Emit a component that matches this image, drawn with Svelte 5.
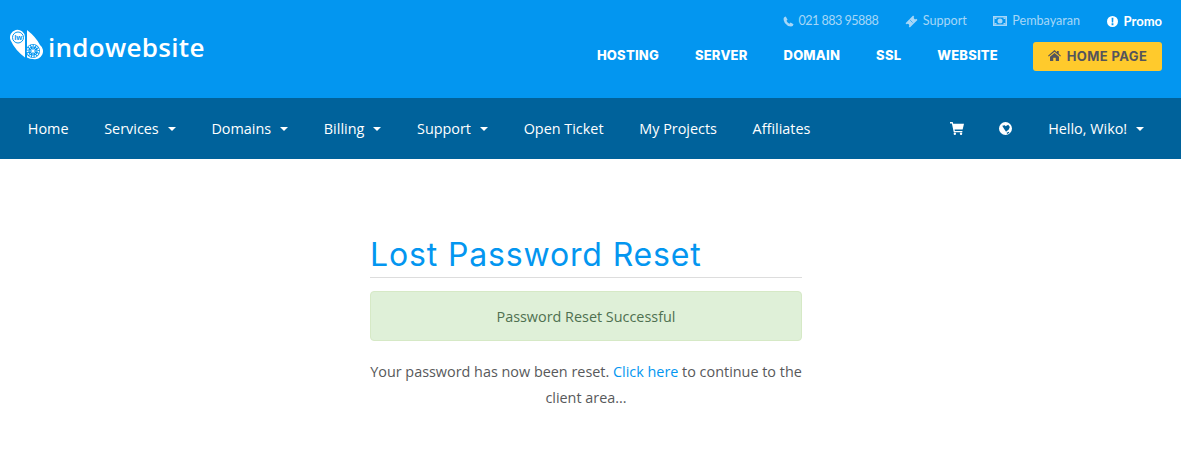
<script>
  const topLinks = [
    { label: 'Support', icon: 'ticket' },
    { label: 'Pembayaran', icon: 'money' }
  ];
  const mainLinks = ['HOSTING', 'SERVER', 'DOMAIN', 'SSL', 'WEBSITE'];
  const navLinks = [
    { label: 'Home' },
    { label: 'Services', caret: true },
    { label: 'Domains', caret: true },
    { label: 'Billing', caret: true },
    { label: 'Support', caret: true },
    { label: 'Open Ticket' },
    { label: 'My Projects' },
    { label: 'Affiliates' }
  ];
</script>

<header class="top">
  <div class="logo">
    <svg class="mark" width="37" height="32" viewBox="0 0 37 32">
      <path d="M15 29.500 V9 A7.500 7.500 0 1 0 .7 12.500 Q5 22 15 29.500Z" fill="#fff" />
      <circle cx="8" cy="9.500" r="5.500" fill="#fff" stroke="#0396f0" stroke-width="1" />
      <text x="4.200" y="11.800" class="mark-text">iw</text>
      <path d="M17 2 Q26 9 30 17 A8 8 0 0 1 23 31 Q20 31 17 29.500Z" fill="#fff" />
      <circle cx="23" cy="23" r="7" fill="#0396f0" />
      <circle cx="23" cy="23" r="5.500" fill="none" stroke="#fff" stroke-width="1.500" stroke-dasharray="1.600 1" />
      <circle cx="23" cy="23" r="1.500" fill="#fff" />
      <path d="M23 18v10M18 23h10M19.500 19.500l7 7M26.500 19.500l-7 7" stroke="#fff" stroke-width="0.600" />
    </svg>
    <span class="logo-text">indowebsite</span>
  </div>
  <div class="top-right">
    <div class="top-links">
      <a class="tlink">
        <svg width="11" height="11" viewBox="0 0 24 24"><path d="M6 1 L10 8 L7.500 10.500 Q9.500 15 14 17 L16.500 14 L23 18 Q22 23 17.500 23 Q9 22 4 15 Q0 9 1.500 4.500 Q3 1.500 6 1Z" fill="currentColor" /></svg>
        <span class="phone">021 883 95888</span>
      </a>
      {#each topLinks as link}
        <a class="tlink">
          {#if link.icon === 'ticket'}
            <svg width="13" height="13" viewBox="0 0 24 24"><path d="M15 1 L17 3 A2.500 2.500 0 0 0 21 7 L23 9 L9 23 L7 21 A2.500 2.500 0 0 0 3 17 L1 15 Z" fill="currentColor" /><path d="M9 9 L15 15" stroke="#0396f0" stroke-width="1.500" stroke-dasharray="2 1.500" /></svg>
          {:else}
            <svg width="14" height="10" viewBox="0 0 28 20"><path fill-rule="evenodd" d="M0 0h28v20H0Z M3 3v14h22V3Z" fill="currentColor" /><circle cx="14" cy="10" r="5" fill="currentColor" /><path d="M3 3h4v3H3ZM21 3h4v3h-4ZM3 14h4v3H3ZM21 14h4v3h-4Z" fill="currentColor" /></svg>
          {/if}
          {link.label}
        </a>
      {/each}
      <a class="tlink promo">
        <svg width="11" height="11" viewBox="0 0 24 24"><path fill-rule="evenodd" d="M12 0a12 12 0 1 0 0 24a12 12 0 0 0 0-24Z M10 4h4l-.5 10h-3Z M10 16h4v4h-4Z" fill="currentColor" /></svg>
        Promo
      </a>
    </div>
    <div class="main-links">
      {#each mainLinks as link}
        <a class="mlink">{link}</a>
      {/each}
      <a class="home-btn">
        <svg width="13" height="11" viewBox="0 0 26 22"><path d="M13 0 L18 4.500 V2 H21.500 V7.500 L26 11.500 L24.500 13 L13 3.500 L1.500 13 L0 11.500 Z M4 13.500 L13 6 L22 13.500 V22 H15.500 V15.500 H10.500 V22 H4 Z" fill="currentColor" /></svg>
        <span>HOME PAGE</span>
      </a>
    </div>
  </div>
</header>

<nav class="bar">
  <div class="nav-left">
    {#each navLinks as link}
      <a class="nlink">{link.label}{#if link.caret}<span class="caret"></span>{/if}</a>
    {/each}
  </div>
  <div class="nav-right">
    <a class="nlink">
      <svg width="14" height="13" viewBox="0 0 26 24"><path d="M0 0 H5 L6 3 H26 L23.500 14 H8.500 L9 16.500 H23 V19 H7 L3.500 2.500 H0 Z" fill="#fff" /><circle cx="9" cy="21.800" r="2.200" fill="#fff" /><circle cx="20.500" cy="21.800" r="2.200" fill="#fff" /></svg>
    </a>
    <a class="nlink">
      <svg width="13" height="13" viewBox="0 0 24 24"><path fill-rule="evenodd" d="M12 0a12 12 0 1 0 0 24a12 12 0 0 0 0-24Z M6 7 L11 6 L12 8 L17 5 L20 9 L18 14 L13 18 L9 12 Z M14 20 L18 18 L19 20 L15 22 Z" fill="#fff" /></svg>
    </a>
    <a class="nlink">Hello, Wiko!<span class="caret"></span></a>
  </div>
</nav>

<main class="content">
  <div class="panel">
    <h1>Lost Password Reset</h1>
    <div class="alert">Password Reset Successful</div>
    <p>Your password has now been reset. <a class="link">Click here</a> to continue to the client area...</p>
  </div>
</main>

<style>
  :global(body) {
    font-family: "Open Sans", sans-serif;
    background: #fff;
  }
  .top {
    height: 98px;
    box-sizing: border-box;
    background: #0396f0;
    display: flex;
    justify-content: space-between;
    padding: 0 19px 0 10px;
  }
  .logo {
    display: flex;
    align-items: flex-start;
    padding-top: 28px;
  }
  .mark {
    margin-right: 1px;
    flex: none;
  }
  .mark-text {
    font-family: "Open Sans", sans-serif;
    font-size: 7px;
    font-weight: 700;
    fill: #0396f0;
  }
  .logo-text {
    font-family: "Open Sans", sans-serif;
    font-size: 26px;
    font-weight: 600;
    line-height: 38px;
    color: #fff;
    letter-spacing: 0.3px;
  }
  .top-right {
    display: flex;
    flex-direction: column;
    align-items: flex-end;
  }
  .top-links {
    display: flex;
    gap: 26.5px;
    padding-top: 14px;
    height: 28px;
    box-sizing: border-box;
  }
  .tlink {
    font-family: "Lato", sans-serif;
    font-size: 12.6px;
    line-height: 18px;
    color: #a6d6f7;
    display: flex;
    align-items: center;
    gap: 5px;
    white-space: nowrap;
  }
  .phone {
    letter-spacing: -0.55px;
  }
  .promo {
    color: #fff;
    font-size: 13px;
    font-weight: 700;
    gap: 6px;
  }
  .main-links {
    display: flex;
    align-items: center;
    margin-top: 14px;
  }
  .mlink {
    font-family: "Inter", sans-serif;
    font-size: 13px;
    font-weight: 800;
    letter-spacing: 0.2px;
    color: #fff;
    margin-right: 36px;
    line-height: 27px;
    height: 29px;
  }
  .home-btn {
    width: 129px;
    height: 29px;
    margin-left: -1px;
    box-sizing: border-box;
    padding-bottom: 2px;
    border-radius: 3px;
    background: #ffca2c;
    color: #54545c;
    font-family: "Inter", sans-serif;
    font-size: 13px;
    font-weight: 700;
    letter-spacing: 0.4px;
    display: flex;
    align-items: center;
    justify-content: center;
    gap: 6px;
  }
  .bar {
    height: 61px;
    background: #00629b;
    display: flex;
    justify-content: space-between;
    align-items: center;
    padding: 0 19px 0 10px;
  }
  .nav-left, .nav-right {
    display: flex;
    align-items: center;
  }
  .nlink {
    font-size: 14.4px;
    line-height: 20px;
    color: #fff;
    padding: 0 17.85px;
    display: flex;
    align-items: center;
    white-space: nowrap;
  }
  .caret {
    margin-left: 9px;
    margin-top: 1px;
    border-top: 4px solid #fff;
    border-left: 4px solid transparent;
    border-right: 4px solid transparent;
  }
  .content {
    display: flex;
    justify-content: center;
    padding: 71px 9px 0 0;
  }
  .panel {
    width: 432px;
  }
  h1 {
    margin: 0;
    height: 47px;
    border-bottom: 1px solid #ddd;
    font-family: "Inter", sans-serif;
    font-weight: 400;
    font-size: 32px;
    line-height: 49px;
    letter-spacing: 0.85px;
    color: #0396f0;
    white-space: nowrap;
  }
  .alert {
    margin-top: 13px;
    height: 50px;
    box-sizing: border-box;
    background: #dff0d8;
    border: 1px solid #d6e9c6;
    border-radius: 4px;
    color: #4f7050;
    font-size: 14.4px;
    display: flex;
    align-items: center;
    justify-content: center;
  }
  p {
    margin: 18px 0 0;
    font-size: 14.4px;
    line-height: 26px;
    color: #58595b;
    text-align: center;
  }
  .link {
    color: #0396f0;
  }
</style>
